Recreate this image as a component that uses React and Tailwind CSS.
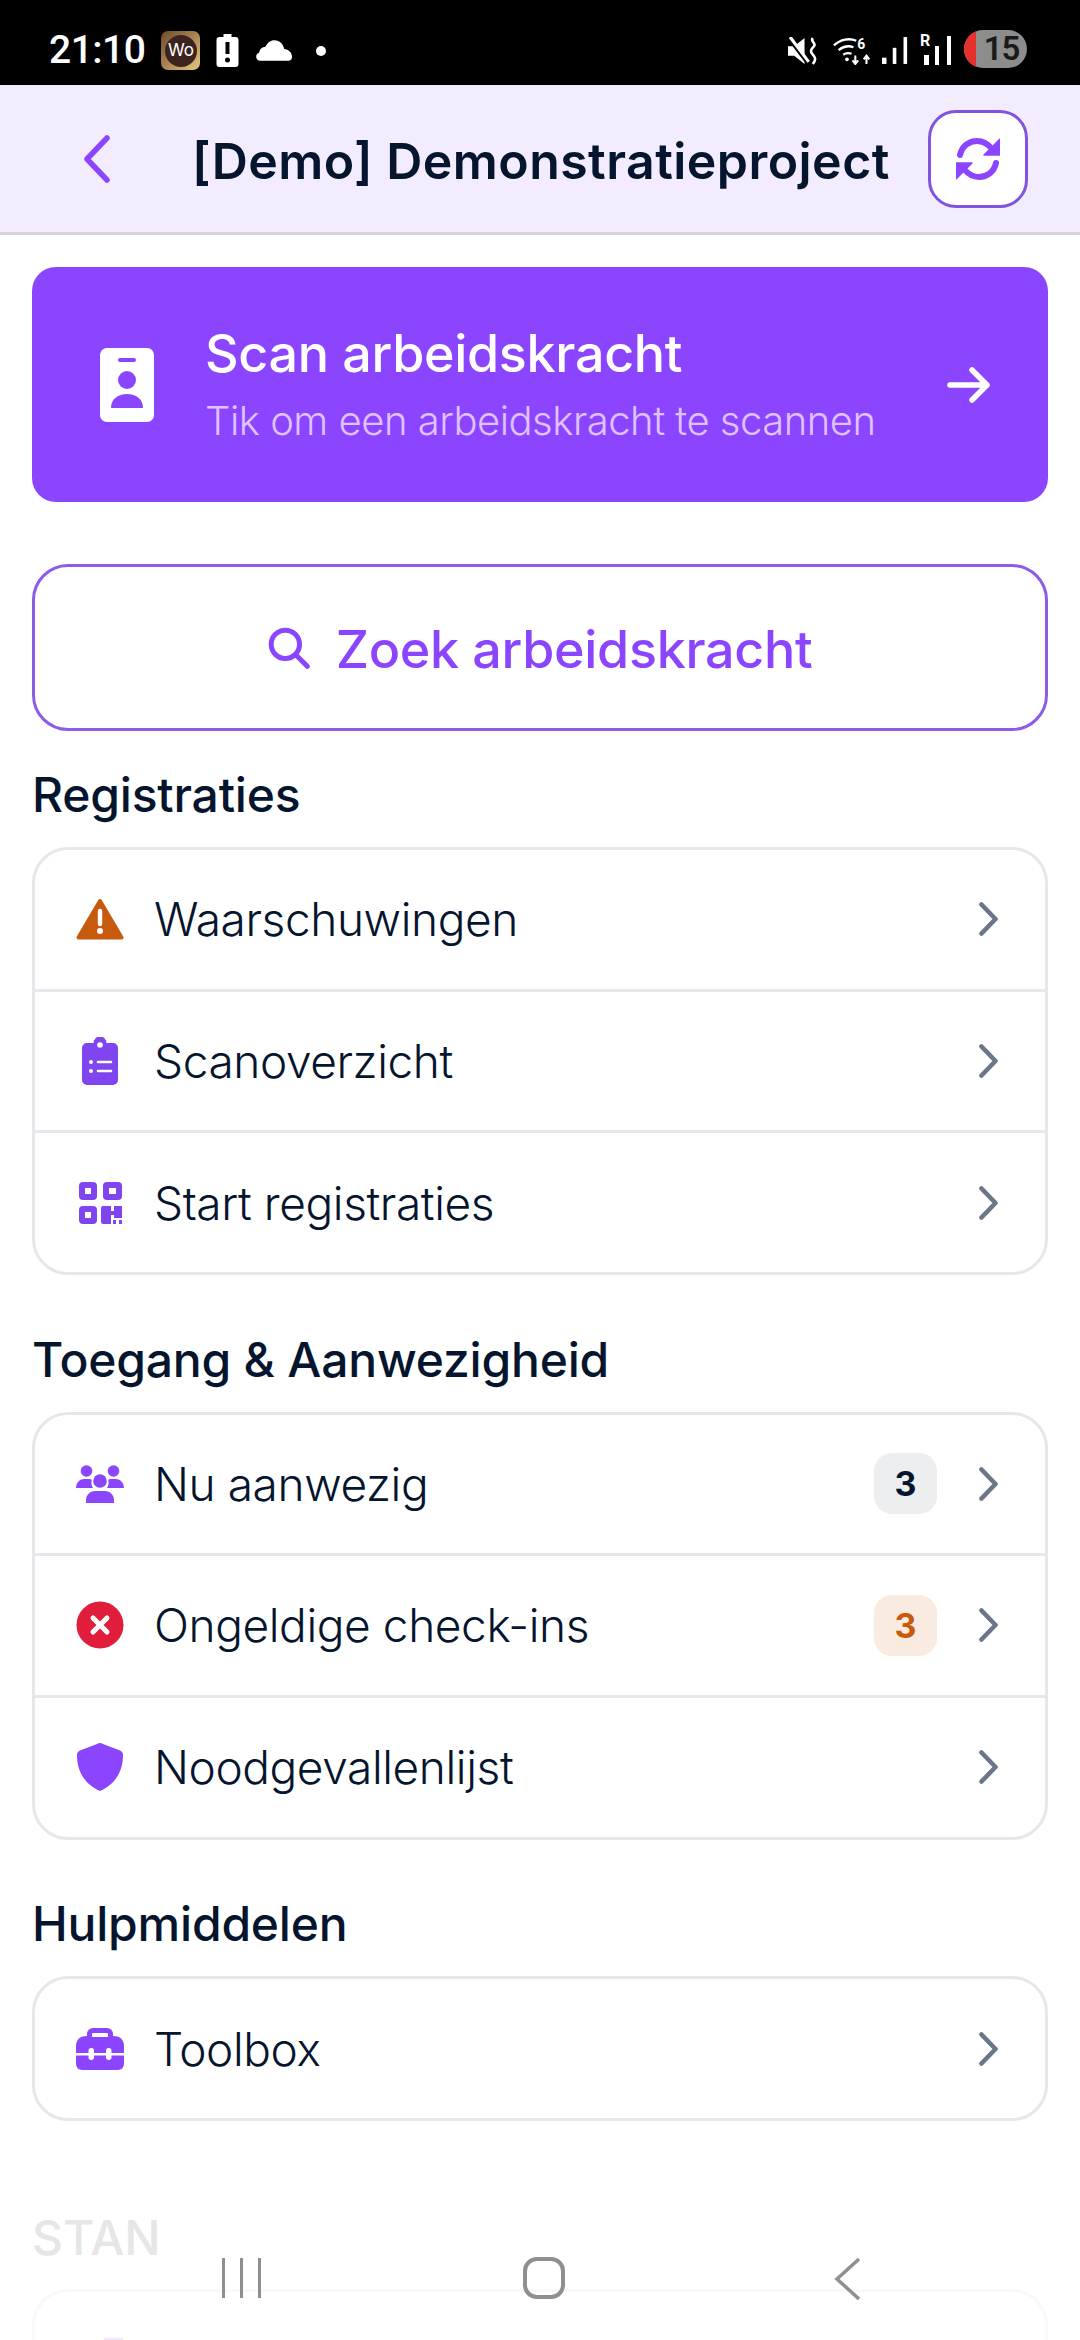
import React from "react";

const Chevron = () => (
  <svg width="19" height="34" viewBox="0 0 19 34" fill="none" className="shrink-0">
    <path d="M2.5 2.5 16.5 17 2.5 31.5" stroke="#6b7788" strokeWidth="4.6" strokeLinecap="round" strokeLinejoin="round" />
  </svg>
);

const WarningIcon = () => (
  <svg width="48" height="42" viewBox="0 0 48 42">
    <path d="M24 3 45.5 39.5H2.5Z" fill="#c85a0d" stroke="#c85a0d" strokeWidth="4" strokeLinejoin="round" />
    <path d="M24 13v13" stroke="#fff" strokeWidth="4.4" strokeLinecap="round" />
    <circle cx="24" cy="33" r="3" fill="#fff" />
  </svg>
);

const ClipboardIcon = () => (
  <svg width="36" height="48" viewBox="0 0 36 48">
    <path d="M5 6h6.5a6.5 6.5 0 0 1 13 0H31a5 5 0 0 1 5 5v32a5 5 0 0 1-5 5H5a5 5 0 0 1-5-5V11a5 5 0 0 1 5-5Z" fill="#8045ee" />
    <circle cx="18" cy="8" r="2.8" fill="#fff" />
    <circle cx="9" cy="25" r="2" fill="#fff" />
    <circle cx="9" cy="34" r="2" fill="#fff" />
    <path d="M16 25h13M16 34h13" stroke="#fff" strokeWidth="2.6" strokeLinecap="round" />
  </svg>
);

const QrIcon = () => (
  <svg width="43" height="42" viewBox="0 0 43 42" fill="#8045ee">
    <path fillRule="evenodd" d="M4 0h10a4 4 0 0 1 4 4v10a4 4 0 0 1-4 4H4a4 4 0 0 1-4-4V4a4 4 0 0 1 4-4Zm2 6v6h6V6Z" />
    <path fillRule="evenodd" d="M28 0h11a4 4 0 0 1 4 4v10a4 4 0 0 1-4 4H28a4 4 0 0 1-4-4V4a4 4 0 0 1 4-4Zm2 6v6h7V6Z" />
    <path fillRule="evenodd" d="M4 24h10a4 4 0 0 1 4 4v10a4 4 0 0 1-4 4H4a4 4 0 0 1-4-4V28a4 4 0 0 1 4-4Zm2 6v6h6v-6Z" />
    <path d="M26 24h6v5h3v-5h8v12h-8v-3h-3v9h-8a2 2 0 0 1-2-2V26a2 2 0 0 1 2-2Z" />
    <rect x="34" y="38" width="3" height="4" />
    <rect x="40" y="38" width="3" height="4" />
  </svg>
);

const UsersIcon = () => (
  <svg width="48" height="38" viewBox="0 0 48 38" fill="#8c45ff">
    <circle cx="10.5" cy="6" r="5.8" />
    <circle cx="37.5" cy="6" r="5.8" />
    <circle cx="24" cy="16" r="6.8" />
    <path d="M0 23c0-5 3.5-9 8-9h5c1 0 2 .3 2.8.7A10 10 0 0 0 17 23Z" />
    <path d="M48 23c0-5-3.500-9-8-9h-5c-1 0-2 .3-2.800.7A10 10 0 0 1 31 23Z" />
    <path d="M10 38v-3c0-5 4-9 9-9h10c5 0 9 4 9 9v3Z" />
  </svg>
);

const ErrorIcon = () => (
  <svg width="48" height="48" viewBox="0 0 48 48">
    <circle cx="24" cy="24" r="23.5" fill="#e01e3c" />
    <path d="M17 17 31 31M31 17 17 31" stroke="#fff" strokeWidth="5" strokeLinecap="round" />
  </svg>
);

const ShieldIcon = () => (
  <svg width="46" height="48" viewBox="0 0 46 48">
    <path d="M23 0c1 0 2 .4 3 1L43 7.500c1.800.7 3 2.300 3 4.200 0 13-4.500 28-23 36.300C4.500 39.700 0 24.700 0 11.700c0-1.900 1.200-3.500 3-4.200L20 1c1-.6 2-1 3-1Z" fill="#8c45ff" />
  </svg>
);

const ToolboxIcon = () => (
  <svg width="48" height="42" viewBox="0 0 48 42">
    <path d="M11 10V6a6 6 0 0 1 6-6h14a6 6 0 0 1 6 6v4Z" fill="#8c45ff" />
    <path d="M10 8h28c6 0 10 4 10 10v18a6 6 0 0 1-6 6H6a6 6 0 0 1-6-6V18C0 12 4 8 10 8Z" fill="#8c45ff" />
    <rect x="16" y="5" width="16" height="4" rx="1" fill="#fff" />
    <rect x="0" y="25" width="48" height="2.500" fill="#fff" />
    <rect x="12.500" y="20" width="5.500" height="12" rx="2.700" fill="#fff" />
    <rect x="30" y="20" width="5.500" height="12" rx="2.700" fill="#fff" />
  </svg>
);

const sections = [
  {
    title: "Registraties",
    rows: [
      { label: "Waarschuwingen", icon: <WarningIcon /> },
      { label: "Scanoverzicht", icon: <ClipboardIcon /> },
      { label: "Start registraties", icon: <QrIcon /> },
    ],
  },
  {
    title: "Toegang & Aanwezigheid",
    rows: [
      { label: "Nu aanwezig", icon: <UsersIcon />, badge: "3" },
      { label: "Ongeldige check-ins", icon: <ErrorIcon />, badge: "3", warn: true },
      { label: "Noodgevallenlijst", icon: <ShieldIcon /> },
    ],
  },
  {
    title: "Hulpmiddelen",
    rows: [{ label: "Toolbox", icon: <ToolboxIcon /> }],
  },
];

const Row = ({ row, last }) => (
  <div className={`flex items-center pl-[41px] pr-[47px] ${last ? "h-[139px]" : "h-[141.5px] border-b-[3px] border-[#e5e7eb]"}`}>
    <div className="w-[48px] flex justify-center shrink-0">{row.icon}</div>
    <span className="ml-[30px] flex-1 text-[46px] font-[350] leading-none tracking-[-0.4px] text-[#06152e]">{row.label}</span>
    {row.badge && (
      <span className={`w-[63px] h-[61px] mr-[42px] rounded-[18px] flex items-center justify-center text-[34px] font-bold ${row.warn ? "bg-[#f9ebe0] text-[#c85a0d]" : "bg-[#eceef0] text-[#06152e]"}`}>
        {row.badge}
      </span>
    )}
    <Chevron />
  </div>
);

const StatusBar = () => (
  <div className="h-[85px] shrink-0 bg-black flex items-center pt-[16px] pl-[49px] pr-[53px] text-white">
    <span className="text-[39px] font-medium tracking-[-0.5px] font-['Roboto',sans-serif]">21:10</span>
    <div className="ml-[16px] w-[39px] h-[39px] rounded-[7px] bg-gradient-to-br from-[#6e4a2c] to-[#e9c77f] flex items-center justify-center">
      <div className="w-[32px] h-[32px] rounded-full bg-[#3d2320] flex items-center justify-center text-[17px] leading-none text-white">Wo</div>
    </div>
    <svg className="ml-[16px]" width="23" height="33" viewBox="0 0 22 33">
      <path d="M7 0h8v3h4a3 3 0 0 1 3 3v24a3 3 0 0 1-3 3H3a3 3 0 0 1-3-3V6a3 3 0 0 1 3-3h4Z" fill="#fff" />
      <path d="M11 8v12" stroke="#000" strokeWidth="4" />
      <circle cx="11" cy="26" r="2.500" fill="#000" />
    </svg>
    <svg className="ml-[17px]" width="36" height="21" viewBox="0 0 35 20">
      <path d="M4 20a4 4 0 0 1-1-7.800C4 8 6 6.500 9 6.500 11 2.500 14 0 18 0c5 0 8.500 3.500 9.500 8.500C31.500 9 35 12 35 16a4 4 0 0 1-3 4Z" fill="#fff" />
    </svg>
    <div className="ml-[24px] w-[10px] h-[10px] rounded-full bg-white" />
    <div className="flex-1" />
    <svg width="30" height="28" viewBox="0 0 29 27" fill="none">
      <path d="M0 9h6l10-8v25L6 18H0Z" fill="#fff" />
      <path d="M1 1 20 26" stroke="#000" strokeWidth="4" />
      <path d="M2 0 20 24" stroke="#fff" strokeWidth="3" />
      <path d="M24 1c-3 3 4 5 1 8s-4 5-1 8 3 5 0 9" stroke="#fff" strokeWidth="2.500" />
    </svg>
    <svg className="ml-[15px]" width="40" height="29" viewBox="0 0 43 31" fill="none">
      <path d="M1 10C8 3 18 2 25 5M6 15c5-4 11-5 16-3M11 20c3-2 6-2 9-1" stroke="#fff" strokeWidth="2.500" />
      <circle cx="15" cy="25" r="2" fill="#fff" />
      <path d="M24 21v8m-3-3 3 4 3-4M36 30v-8m-3 3 3-4 3 4" stroke="#fff" strokeWidth="2.200" />
      <text x="26" y="14" fontSize="15" fontWeight="700" fill="#fff" fontFamily="Roboto, sans-serif">6</text>
    </svg>
    <svg className="ml-[9px]" width="26" height="29" viewBox="0 0 29 30" fill="#fff">
      <rect x="0" y="23" width="5" height="7" />
      <rect x="12" y="12" width="4" height="18" />
      <rect x="24" y="0" width="4" height="30" />
    </svg>
    <div className="ml-[12px] relative w-[32px] h-[29px]">
      <span className="absolute left-0 top-[-3px] text-[16px] font-bold leading-none font-['Roboto',sans-serif]">R</span>
      <div className="absolute left-[4px] bottom-0 w-[5px] h-[10px] bg-white" />
      <div className="absolute left-[15px] bottom-0 w-[4px] h-[19px] bg-white" />
      <div className="absolute left-[27px] bottom-0 w-[4px] h-[29px] bg-white" />
    </div>
    <div className="ml-[12px] w-[63px] h-[38px] rounded-full bg-[#8c8c8c] overflow-hidden flex mt-[-4px]">
      <div className="w-[12px] bg-[#e5302b]" />
      <span className="flex-1 text-center text-[33px] leading-[38px] font-semibold text-[#1a1a1a] tracking-[-1px] font-['Roboto',sans-serif]">15</span>
    </div>
  </div>
);

const Header = () => (
  <div className="h-[150px] shrink-0 bg-[#f3ecff] border-b-[3px] border-[#d3d3dc] flex items-center pl-[84px] pr-[52px]">
    <svg width="26" height="48" viewBox="0 0 26 48" fill="none">
      <path d="M23 3 3 24l20 21" stroke="#8c45ff" strokeWidth="5.500" strokeLinecap="round" strokeLinejoin="round" />
    </svg>
    <h1 className="ml-[82px] pt-[5px] flex-1 text-[50px] font-semibold tracking-[0.45px] text-[#06152e] whitespace-nowrap">[Demo] Demonstratieproject</h1>
    <button className="w-[100px] h-[98px] rounded-[28px] bg-white border-[3px] border-[#8054e0] flex items-center justify-center">
      <svg width="44" height="42" viewBox="0 0 44 42" fill="none">
        <path d="M4 17C6 8 13 3 21 3c6 0 11 3 15 8" stroke="#8c45ff" strokeWidth="6" strokeLinecap="round" />
        <path d="M44 1v16H28Z" fill="#8c45ff" stroke="#8c45ff" strokeWidth="1.500" strokeLinejoin="round" />
        <path d="M40 25c-2 9-9 14-17 14-6 0-11-3-15-8" stroke="#8c45ff" strokeWidth="6" strokeLinecap="round" />
        <path d="M0 41V25h16Z" fill="#8c45ff" stroke="#8c45ff" strokeWidth="1.500" strokeLinejoin="round" />
      </svg>
    </button>
  </div>
);

export default function App() {
  return (
    <div className="relative h-[2340px] w-[1080px] overflow-hidden bg-white font-['Inter',sans-serif]">
      <StatusBar />
      <Header />
      <div className="px-[32px] pt-[32px]">
        <div className="h-[235px] rounded-[24px] bg-[#8c45ff] flex items-center pl-[68px] pr-[57px]">
          <svg width="54" height="74" viewBox="0 0 54 74" className="shrink-0">
            <rect width="54" height="74" rx="7" fill="#fff" />
            <rect x="18" y="10" width="18" height="4" rx="2" fill="#8c45ff" />
            <circle cx="27" cy="32" r="9" fill="#8c45ff" />
            <path d="M11 60c0-9 7-14 16-14s16 5 16 14Z" fill="#8c45ff" />
          </svg>
          <div className="ml-[51px] flex-1">
            <div className="text-[52px] font-[550] leading-[60px] tracking-[-0.3px] text-white">Scan arbeidskracht</div>
            <div className="mt-[13px] text-[40px] font-light leading-[48px] tracking-[-0.5px] text-[#dfc2ff]">Tik om een arbeidskracht te scannen</div>
          </div>
          <svg width="44" height="36" viewBox="0 0 44 36" fill="none">
            <path d="M3 18h37M25 3l15 15-15 15" stroke="#fff" strokeWidth="5.500" strokeLinecap="round" strokeLinejoin="round" />
          </svg>
        </div>

        <div className="mt-[62px] h-[167px] rounded-[36px] border-[3px] border-[#8c5ce8] flex items-center justify-center">
          <svg width="42" height="42" viewBox="0 0 46 46" fill="none">
            <circle cx="19" cy="19" r="15.500" stroke="#8c45ff" strokeWidth="5.500" />
            <path d="M31 31l12 12" stroke="#8c45ff" strokeWidth="5.500" strokeLinecap="round" />
          </svg>
          <span className="ml-[26px] pt-[5px] text-[52px] font-[550] tracking-[-0.3px] text-[#8c45ff]">Zoek arbeidskracht</span>
        </div>

        <div className="mt-[36px] flex flex-col gap-[56.5px]">
          {sections.map((section) => (
            <section key={section.title}>
              <h2 className="h-[56px] mb-[24px] text-[48px] font-[550] leading-[56px] tracking-[-0.2px] text-[#06152e]">{section.title}</h2>
              <div className="rounded-[36px] border-[3px] border-[#e5e7eb] bg-white">
                {section.rows.map((row, i) => (
                  <Row key={row.label} row={row} last={i === section.rows.length - 1} />
                ))}
              </div>
            </section>
          ))}
        </div>

        <div className="mt-[89px]">
          <h2 className="h-[56px] mb-[23px] text-[48px] font-medium leading-[56px] text-[#e6e6e6]">STAN</h2>
          <div className="h-[200px] rounded-[36px] border-[3px] border-[#f9f9f9] pl-[45px] pt-[46px]">
            {/* faded bars of the next row's icon, clipped by the page edge */}
            <div className="flex items-start gap-[7px]">
              <div className="mt-[3px] w-[17px] h-[40px] bg-[#f3ecff]" />
              <div className="w-[19px] h-[40px] bg-[#f1e9ff]" />
            </div>
          </div>
        </div>
      </div>

      {/* system nav floats above the faded content */}
      <div className="absolute left-0 right-0 bottom-0 h-[82px]">
        <div className="absolute left-[222px] top-[0px] flex gap-[15px]">
          <div className="w-[3px] h-[40px] bg-[#8f8f8f]" />
          <div className="w-[3px] h-[40px] bg-[#8f8f8f]" />
          <div className="w-[3px] h-[40px] bg-[#8f8f8f]" />
        </div>
        <div className="absolute left-[523px] top-[-1px] w-[42px] h-[42px] rounded-[14px] border-[4px] border-[#8f8f8f]" />
        <svg className="absolute left-[832px] top-[-1px]" width="30" height="44" viewBox="0 0 30 44" fill="none">
          <path d="M27 2 5 22l22 20" stroke="#8f8f8f" strokeWidth="3.500" />
        </svg>
      </div>
    </div>
  );
}
